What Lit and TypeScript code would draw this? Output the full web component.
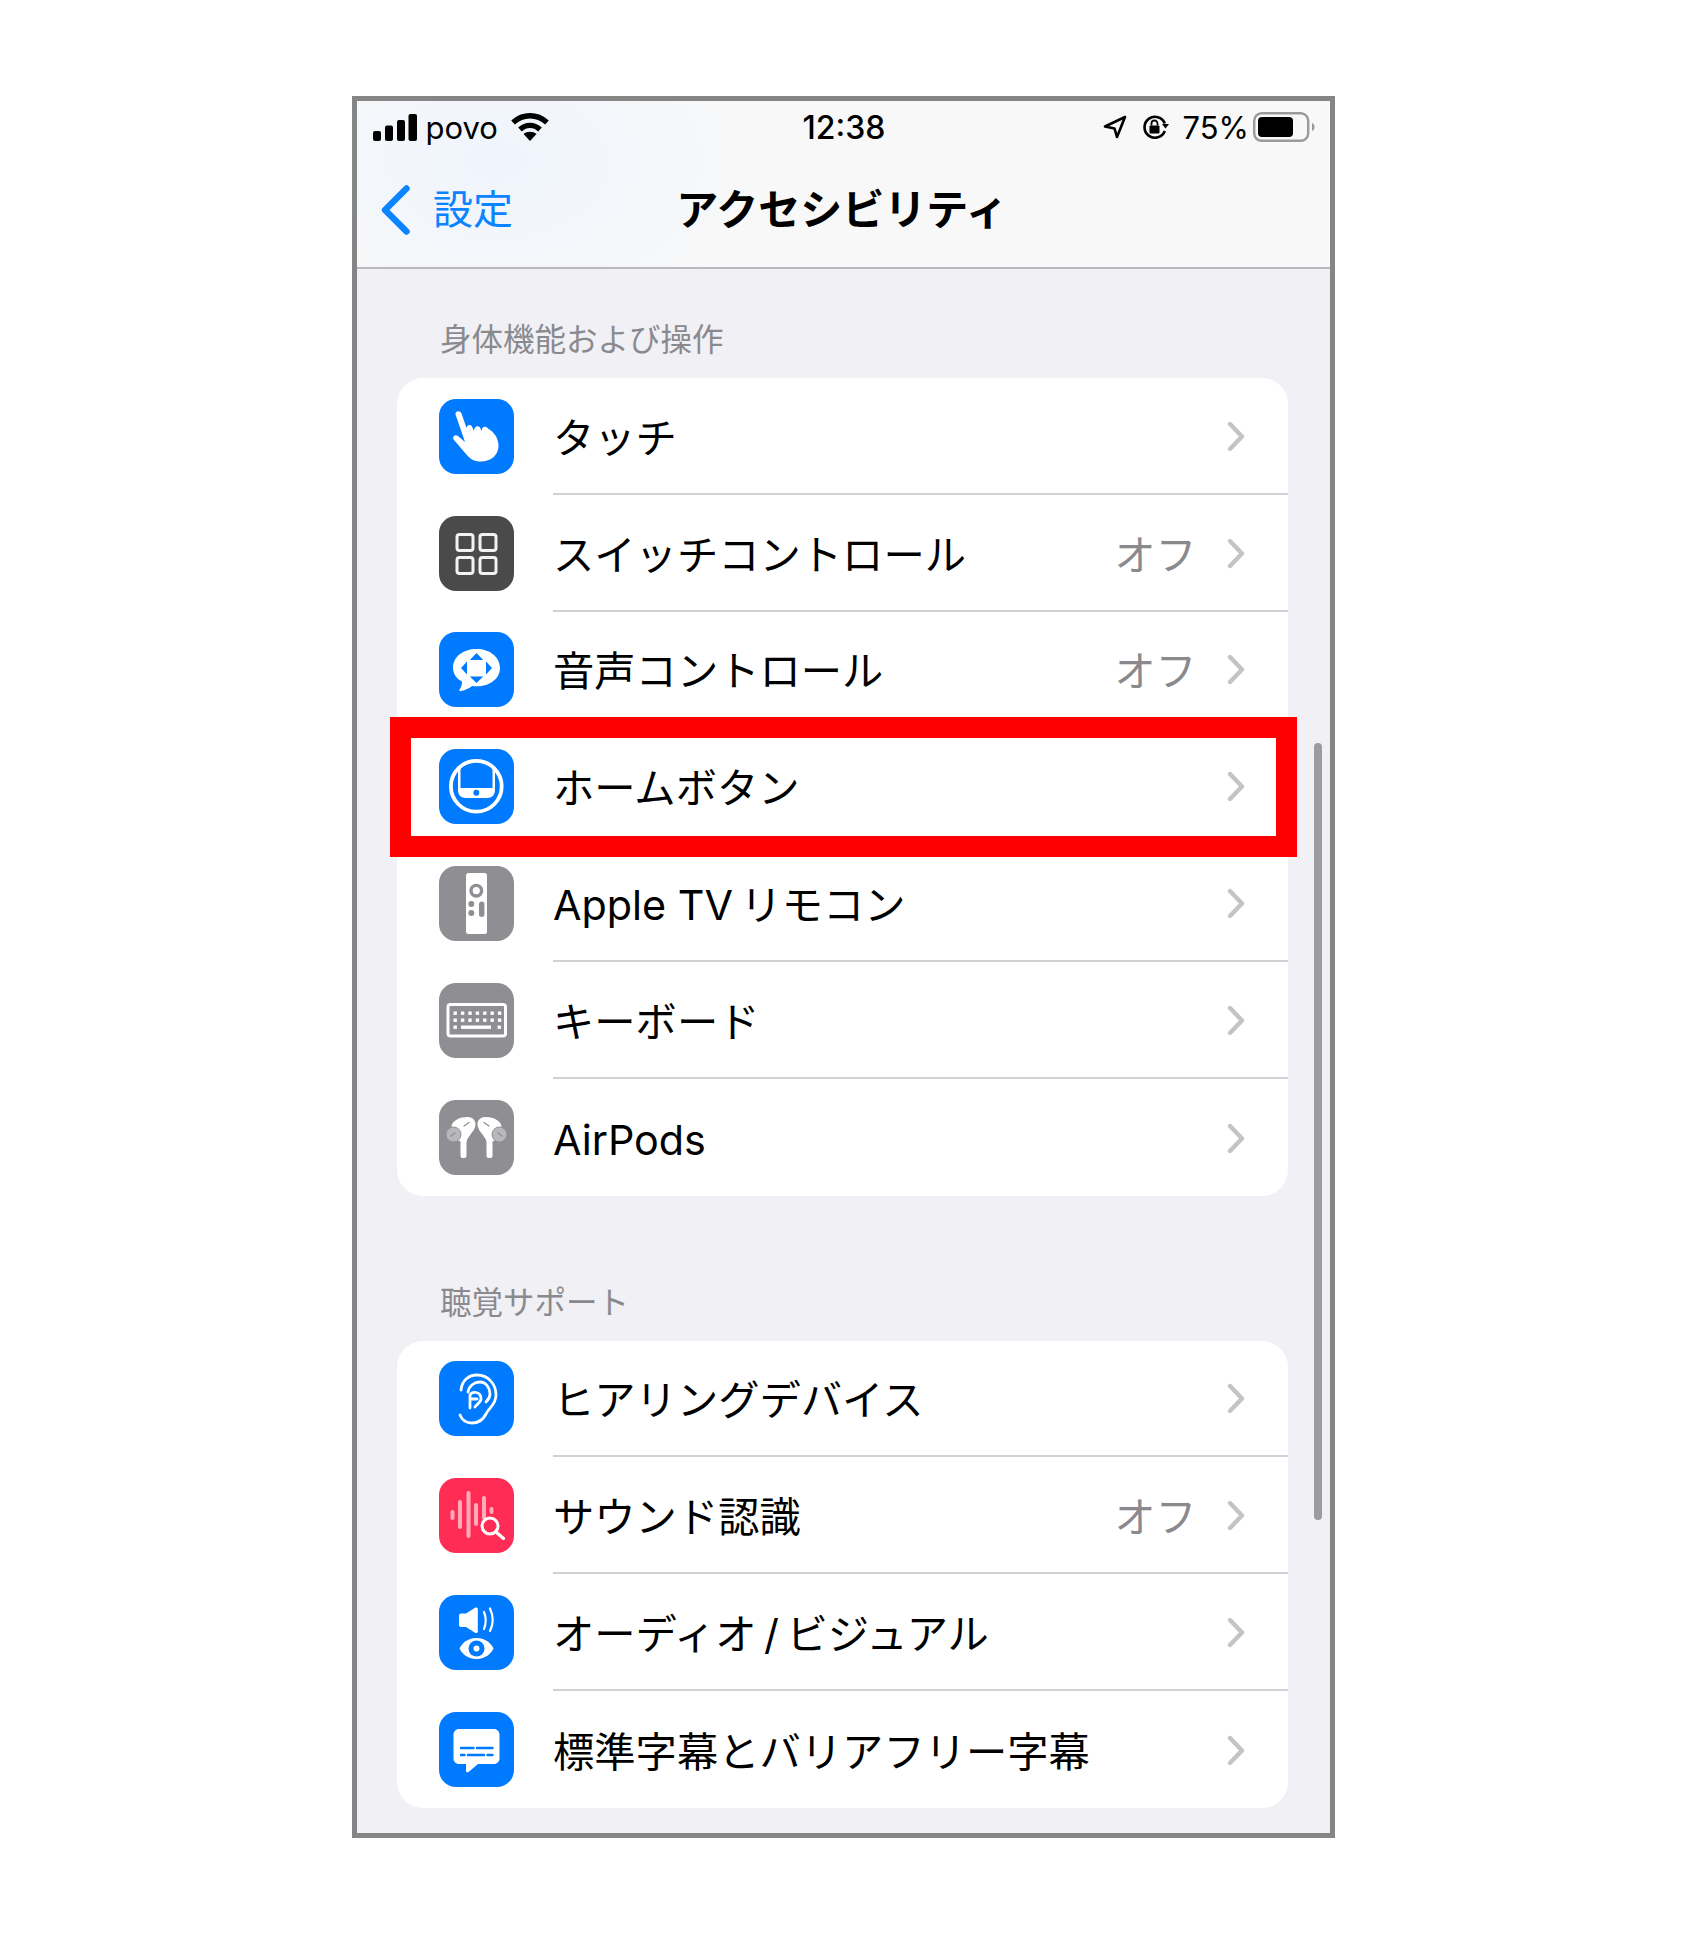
import { LitElement, html, css, svg } from "lit";
import { customElement } from "lit/decorators.js";

const ICONS: Record<string, unknown> = {
  touch: svg`<path d="M16.500 15.500C16 12 21 11 22.500 14.500L27.500 29C28 26 31 25 33 27.500L35 32C35 27 39 26 41 28.500L42.500 32C43 27 47 27 49 29.500C55 33 59.500 39 59.500 47C59.500 56 52 62.500 42 62.500C35 62.500 31 60 27 55L15 41C12.500 38 16 34.500 19 37L26 43Z" fill="#fff"/>`,
  switch: svg`<g fill="none" stroke="#f2f2f2" stroke-width="3"><rect x="18" y="18.500" width="16" height="16" rx="2.500"/><rect x="41" y="18.500" width="16" height="16" rx="2.500"/><rect x="18" y="41.500" width="16" height="16" rx="2.500"/><rect x="41" y="41.500" width="16" height="16" rx="2.500"/></g>`,
  voice: svg`<path d="M37.500 17C24 17 14 25 14 35.500C14 41.500 17 46.500 23 49.500C23 53 22 55.500 20.500 57.500C20 58.500 20.500 59.500 22 59C26.500 58 30 56.500 33 54C34.500 54.200 36 54.300 37.500 54.300C51 54.300 61 46.500 61 36C61 25 51 17 37.500 17Z" fill="#fff"/><path d="M37.500 21l6.700 7H30.800zM37.500 51l-6.700-6.500h13.400zM22 36l6-6.500v13zM53 36l-6-6.500v13z" fill="#007aff"/>`,
  home: svg`<circle cx="37.300" cy="37.300" r="25.400" fill="none" stroke="#fff" stroke-width="3.800"/><path d="M19 21V41C19 46 22 49 27 49H48C53 49 56 46 56 41V21L53.500 18.500V39H21.500V18.500Z" fill="#fff"/><circle cx="37.300" cy="43.800" r="3" fill="#007aff"/>`,
  remote: svg`<rect x="27" y="7" width="21" height="61" rx="2.500" fill="#fff"/><circle cx="37.300" cy="24.700" r="5.300" fill="none" stroke="#8e8e93" stroke-width="3.400"/><circle cx="32.300" cy="38" r="3" fill="#8e8e93"/><circle cx="32.300" cy="47" r="3" fill="#8e8e93"/><rect x="40" y="35.500" width="5.400" height="15.500" rx="2.700" fill="#8e8e93"/>`,
  keyboard: svg`<rect x="9" y="21.500" width="57.500" height="31.500" rx="2.500" fill="none" stroke="#fff" stroke-width="3"/>
    <g fill="#fff">${[0, 1, 2, 3, 4, 5, 6].map(
      (i) => svg`<rect x="${14.500 + i * 7.400}" y="28.500" width="3.400" height="3.400"/><rect x="${14.500 + i * 7.400}" y="35.500" width="3.400" height="3.400"/>`
    )}<rect x="14.500" y="42.500" width="3.400" height="3.400"/><rect x="22" y="42.500" width="30" height="3.400"/><rect x="58.500" y="42.500" width="3.400" height="3.400"/></g>`,
  airpods: svg`<g fill="#fff"><rect x="21.500" y="38" width="6" height="20" rx="2"/><rect x="47.500" y="38" width="6" height="20" rx="2"/><path d="M29 17C33 17 36.500 20 36.500 24C36.500 29 33 32 30.500 36C29 38 27.500 40 27.500 42H21.500V41C16 41 12.500 33 12.500 27C12.500 22 18.500 17 29 17Z"/><path d="M46 17C42 17 38.500 20 38.500 24C38.500 29 42 32 44.500 36C46 38 47.500 40 47.500 42H53.500V41C59 41 62.500 33 62.500 27C62.500 22 56.500 17 46 17Z"/></g><circle cx="14.500" cy="34.500" r="7.500" fill="#b8b8ba" stroke="#8e8e93" stroke-width="1"/><circle cx="60.500" cy="34.500" r="7.500" fill="#b8b8ba" stroke="#8e8e93" stroke-width="1"/><path d="M25 26l5-3.500M45 22.500l5 3.500M12 36l4-3M59 33l4 3" stroke="#8e8e93" stroke-width="1.300" stroke-linecap="round"/>`,
  ear: svg`<g fill="none" stroke="#fff" stroke-width="2.800" stroke-linecap="round" stroke-linejoin="round"><path d="M22 29C23 19 30 14 38 14C49 14 57 23 57 34C57 44 50 46 47 53C44 59 40 62 33 62C27 62 23 59 21 54"/><path d="M29 31C30 25 35 21 41 21C47 21 51 27 51 33C51 37 49 39 47 41"/><path d="M31 47V34C33 30 42 30 42 38C42 41 38 43 36 46M31 38H38"/></g>`,
  sound: svg`<g fill="#fff" fill-opacity=".6"><rect x="11.500" y="32" width="4" height="10" rx="2"/><rect x="19" y="22" width="4" height="29" rx="2"/><rect x="27.500" y="13" width="4" height="47" rx="2"/><rect x="35" y="25" width="4" height="23" rx="2"/><rect x="43" y="18" width="4" height="24" rx="2"/><rect x="50.500" y="29" width="4" height="7" rx="2"/></g><circle cx="51" cy="48" r="8" fill="#ff2d55" stroke="#fff" stroke-width="3"/><path d="M57 54l7.500 6.500" stroke="#fff" stroke-width="3.200" stroke-linecap="round"/>`,
  av: svg`<path d="M22 18.500H27L36 12.700C37.300 12 38.800 12.700 38.800 14V36.500C38.800 37.800 37.300 38.500 36 37.800L27 32H22C20.800 32 20 31 20 30V20.500C20 19.500 20.800 18.500 22 18.500Z" fill="#fff"/><g fill="none" stroke="#fff" stroke-width="2.200" stroke-linecap="round"><path d="M45 17C47 22 47 29 45 34"/><path d="M51 13.500C54.500 21 54.500 29 51 36"/></g><path d="M37.500 43C28 43 22.500 49 20.500 53.500C22.500 58 28 64 37.500 64S52.500 58 54.500 53.500C52.500 49 47 43 37.500 43Z" fill="#fff"/><circle cx="37.500" cy="53.500" r="8" fill="#007aff"/><circle cx="37.500" cy="53.500" r="3" fill="#fff"/>`,
  caption: svg`<path d="M20 17H55C58 17 60.500 19.500 60.500 22.500V46.500C60.500 49.500 58 52 55 52H39L29.500 60C28.500 60.800 27 60.200 27 59V52H20C17 52 14.500 49.500 14.500 46.500V22.500C14.500 19.500 17 17 20 17Z" fill="#fff"/><path d="M22 36H34.500M38 36H53.500M22 43H25.500M29 43H45M48.500 43H53.500" stroke="#007aff" stroke-width="2.400" stroke-linecap="round"/>`,
};

interface Row {
  icon: string;
  color: string;
  label: string;
  value?: string;
}

const HEAD1: Row[] = [
  { icon: "touch", color: "blue", label: "タッチ" },
  { icon: "switch", color: "dark", label: "スイッチコントロール", value: "オフ" },
  { icon: "voice", color: "blue", label: "音声コントロール", value: "オフ" },
  { icon: "home", color: "blue", label: "ホームボタン" },
  { icon: "remote", color: "gray", label: "Apple TV\u2009リモコン" },
  { icon: "keyboard", color: "gray", label: "キーボード" },
  { icon: "airpods", color: "gray", label: "AirPods" },
];
const HEAD2: Row[] = [
  { icon: "ear", color: "blue", label: "ヒアリングデバイス" },
  { icon: "sound", color: "pink", label: "サウンド認識", value: "オフ" },
  { icon: "av", color: "blue", label: "オーディオ\u2009/\u2009ビジュアル" },
  { icon: "caption", color: "blue", label: "標準字幕とバリアフリー字幕" },
];

@customElement("app-root")
export class AppRoot extends LitElement {
  static styles = css`
    :host {
      display: block;
      background: #fff;
      height: 1934px;
      padding: 96px 0 0 352px;
      box-sizing: border-box;
      font-family: "Inter", "Noto Sans CJK JP", sans-serif;
      color: #000;
    }
    .phone {
      position: relative;
      width: 983px;
      height: 1742px;
      box-sizing: border-box;
      border: 5px solid #858585;
      background: #f0f0f5;
      overflow: hidden;
    }
    .bars {
      height: 168px;
      box-sizing: border-box;
      border-bottom: 2px solid #b9b9bc;
      background: radial-gradient(ellipse 260px 180px at 140px 60px, #eff5fd, transparent), #f8f8f8;
    }
    .status {
      height: 52px;
      display: grid;
      grid-template-columns: 1fr auto 1fr;
      align-items: center;
      padding: 0 15px 0 16px;
      font-size: 31px;
    }
    .status-left, .status-right { display: flex; align-items: center; }
    .status-left { gap: 12px; }
    .status-right { justify-content: flex-end; gap: 13px; }
    .carrier { margin-left: -3.500px; }
    .wifi { margin-left: 1px; }
    .time { font-weight: 500; font-size: 32px; }
    .arrow { margin-right: 2.500px; }
    .lock { margin-right: -1px; }
    .pct { margin-right: -9px; }
    .nav {
      position: relative;
      height: 114px;
      display: flex;
      align-items: center;
      justify-content: center;
      padding-bottom: 7px;
      box-sizing: border-box;
    }
    .back {
      position: absolute;
      left: 24px;
      top: 32px;
      display: flex;
      align-items: center;
      gap: 22px;
      color: #0a84ff;
      font-size: 40px;
      font-weight: 400;
      line-height: 50px;
    }
    .title {
      font-size: 42px;
      font-weight: 700;
      margin-right: 3px;
    }
    .section-head {
      height: 31px;
      line-height: 31px;
      padding-left: 83px;
      font-size: 31.500px;
      color: #8a8a8e;
    }
    .first { margin-top: 55px; }
    .second { margin-top: 91px; }
    .card {
      margin: 23px 0 0 40px;
      width: 891px;
      background: #fff;
      border-radius: 26px;
      overflow: hidden;
    }
    .row {
      height: 116.800px;
      display: flex;
      align-items: center;
      padding-left: 42px;
    }
    .icon {
      flex: none;
      width: 75px;
      height: 75px;
      border-radius: 17px;
      display: block;
    }
    .blue { background: #007aff; }
    .dark { background: #4a4a4a; }
    .gray { background: #8e8e93; }
    .pink { background: #ff2d55; }
    .body {
      flex: 1;
      height: 100%;
      margin-left: 39px;
      display: flex;
      align-items: center;
      padding-right: 43.500px;
      border-bottom: 2px solid #d2d2d4;
      box-sizing: border-box;
    }
    .row:last-child .body { border-bottom: 0; }
    .label { flex: 1; font-size: 41.300px; line-height: 60px; padding-top: 5px; white-space: pre; font-weight: 400; }
    .value { font-size: 41px; line-height: 60px; padding-top: 5px; color: #8a8a8e; margin-right: 30px; }
    .chev { flex: none; display: block; margin-top: 2px; }
    .scroll {
      position: absolute;
      right: 8px;
      top: 642px;
      width: 8px;
      height: 777px;
      border-radius: 4px;
      background: #9c9c9f;
    }
    .highlight {
      position: absolute;
      left: 33px;
      top: 616px;
      width: 907px;
      height: 140px;
      box-sizing: border-box;
      border: 21px solid #ff0000;
    }
  `;

  private row(r: Row) {
    return html`<div class="row">
      <svg class="icon ${r.color}" viewBox="0 0 75 75">${ICONS[r.icon]}</svg>
      <div class="body">
        <span class="label">${r.label}</span>
        ${r.value ? html`<span class="value">${r.value}</span>` : ""}
        <svg class="chev" width="18" height="31" viewBox="0 0 18 31">
          <path d="M3 3l12 12.500L3 28" fill="none" stroke="#c4c4c7" stroke-width="4.400" stroke-linecap="round" stroke-linejoin="round" />
        </svg>
      </div>
    </div>`;
  }

  render() {
    return html`<div class="phone">
      <div class="bars">
        <div class="status">
          <div class="status-left">
            <svg width="44" height="27" viewBox="0 0 44 27" fill="#000">
              <rect x="0" y="17" width="8" height="10" rx="2" />
              <rect x="12" y="11.500" width="8" height="15.500" rx="2" />
              <rect x="24" y="6" width="8" height="21" rx="2" />
              <rect x="35.500" y="0" width="8.500" height="27" rx="2" />
            </svg>
            <span class="carrier">povo</span>
            <svg class="wifi" width="38" height="28" viewBox="0 0 38 28">
              <g fill="none" stroke="#000" stroke-width="5.400">
                <path d="M2 9.500c10-9 24-9 34 0" />
                <path d="M9 16.500c6-5.500 14-5.500 20 0" />
              </g>
              <path d="M19 28l-6.500-7c3.600-3 9.400-3 13 0z" fill="#000" />
            </svg>
          </div>
          <div class="time">12:38</div>
          <div class="status-right">
            <svg class="arrow" width="24" height="24" viewBox="0 0 24 24">
              <path d="M22 2L2 11.500l9.500 2L14 22z" fill="none" stroke="#000" stroke-width="2.600" stroke-linejoin="round" />
            </svg>
            <svg class="lock" width="28" height="24" viewBox="0 0 28 24">
              <path d="M22.800 16A10.500 10.500 0 1 1 22.800 8.500" fill="none" stroke="#000" stroke-width="2.600" />
              <path d="M20 9h7l-3.500 4.500z" fill="#000" />
              <rect x="7.500" y="10.500" width="10" height="8" rx="1" fill="#000" />
              <path d="M9.500 10.500V8.500a3 3 0 0 1 6 0v2" fill="none" stroke="#000" stroke-width="1.800" />
            </svg>
            <span class="pct">75%</span>
            <svg width="62" height="30" viewBox="0 0 62 30">
              <rect x="1.200" y="1.200" width="54" height="27.600" rx="7.500" fill="none" stroke="#9a9a9a" stroke-width="2.400" />
              <path d="M5 9a4 4 0 0 1 4-4h27a4 4 0 0 1 4 4v12a4 4 0 0 1-4 4H9a4 4 0 0 1-4-4z" fill="#000" />
              <path d="M59 11c1.500.5 2.500 2 2.500 4s-1 3.500-2.500 4z" fill="#9a9a9a" />
            </svg>
          </div>
        </div>
        <div class="nav">
          <div class="back">
            <svg width="30" height="50" viewBox="0 0 30 50">
              <path d="M25.500 3.500L4 25l21.500 21.500" fill="none" stroke="#0a84ff" stroke-width="6.400" stroke-linecap="round" stroke-linejoin="round" />
            </svg>
            <span>設定</span>
          </div>
          <div class="title">アクセシビリティ</div>
        </div>
      </div>
      <div class="section-head first">身体機能および操作</div>
      <div class="card">${HEAD1.map((r) => this.row(r))}</div>
      <div class="section-head second">聴覚サポート</div>
      <div class="card">${HEAD2.map((r) => this.row(r))}</div>
      <div class="scroll"></div>
      <div class="highlight"></div>
    </div>`;
  }
}
